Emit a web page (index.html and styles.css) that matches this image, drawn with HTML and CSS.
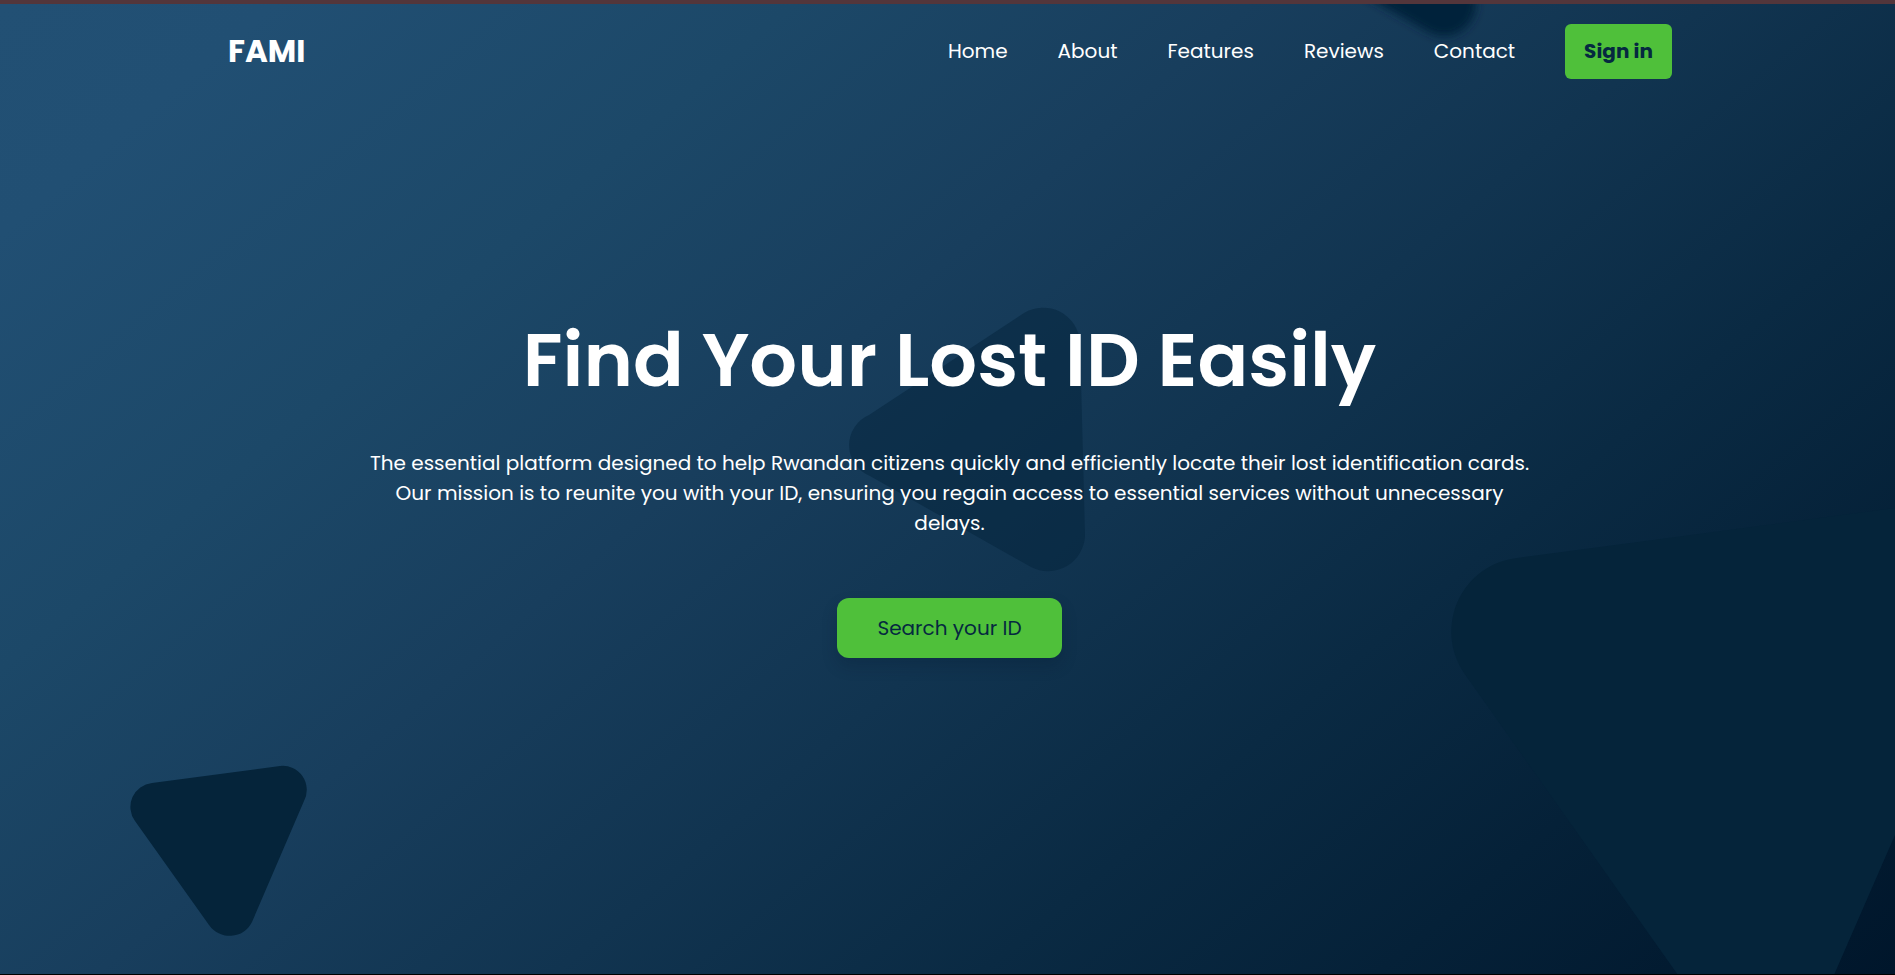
FILE: index.html
```html
<!DOCTYPE html>
<html lang="en">
<head>
<meta charset="utf-8">
<meta name="viewport" content="width=device-width, initial-scale=1">
<title>FAMI</title>
<link rel="stylesheet" href="styles.css">
</head>
<body>
<div class="page">
  <svg class="shapes" viewBox="0 0 1895 970" preserveAspectRatio="xMidYMid slice" aria-hidden="true">
    <defs>
      <filter id="soft" filterUnits="userSpaceOnUse" x="1200" y="-300" width="400" height="400"><feGaussianBlur stdDeviation="5"/></filter>
    </defs>
    <path class="shape soft" filter="url(#soft)" d="M1300 -82 L1442 -142 L1444 0 Z"/>
    <path class="shape faint" d="M1024 309 A37 37 0 0 1 1080 338 L1085 532 A37 37 0 0 1 1031 563 L870 472 A33 33 0 0 1 869 411 Z"/>
    <path class="shape" d="M152 779 L280 762 A24 24 0 0 1 304 797 L252 918 A25 25 0 0 1 209 921 L135 817 A24 24 0 0 1 152 779 Z"/>
    <path class="shape" d="M1517 554 L1895 504 L1990 600 L1895 831 L1834 971 L1678 971 L1464 669 A74 74 0 0 1 1517 554 Z"/>
  </svg>
  <header class="header">
    <a class="logo" href="#home">FAMI</a>
    <nav class="nav" aria-label="Main">
      <a class="nav-link" href="#home">Home</a>
      <a class="nav-link" href="#about">About</a>
      <a class="nav-link" href="#features">Features</a>
      <a class="nav-link" href="#reviews">Reviews</a>
      <a class="nav-link" href="#contact">Contact</a>
      <button class="sign-in" type="button">Sign in</button>
    </nav>
  </header>
  <main class="hero" id="home">
    <h1 class="title">Find Your Lost ID Easily</h1>
    <p class="lead">The essential platform designed to help Rwandan citizens quickly and efficiently locate their lost identification cards. Our mission is to reunite you with your ID, ensuring you regain access to essential services without unnecessary delays.</p>
    <button class="search" type="button">Search your ID</button>
  </main>
</div>
</body>
</html>
```
FILE: styles.css
```css
* {
  box-sizing: border-box;
}

body {
  margin: 0;
  color: #fff;
  font-family: Poppins, Inter, sans-serif;
}

button {
  border: 0;
  background: #4fc03a;
  color: #052940;
  font-family: inherit;
  cursor: pointer;
}

.page {
  position: relative;
  display: flex;
  flex-direction: column;
  min-height: 100vh;
  overflow: hidden;
  border-top: 4px solid #53363b;
  border-bottom: 1px solid #000;
  background: linear-gradient(140deg, #225074 0%, #214f73 9%, #1c4868 26%, #183e5d 41%, #113450 56%, #0a2a43 70%, #052138 83%, #00162b 100%);
}

.shapes {
  position: absolute;
  inset: 0;
  width: 100%;
  height: 100%;
}

.shape {
  fill: #05243a;
}

.faint {
  fill: #04243b;
  opacity: 0.5;
}

.soft {
  stroke: #05243a;
  stroke-width: 64px;
  stroke-linejoin: round;
}

.header {
  position: relative;
  display: flex;
  align-items: center;
  justify-content: space-between;
  padding: 20px 223px 0 228px;
}

.logo {
  padding-bottom: 1px;
  color: #fff;
  font-size: 31px;
  font-weight: 700;
  line-height: 40px;
  text-decoration: none;
}

.nav {
  display: flex;
  align-items: center;
  gap: 50px;
}

.nav-link {
  padding-bottom: 1px;
  color: #fff;
  font-size: 20px;
  line-height: 30px;
  text-decoration: none;
}

.sign-in {
  padding: 12px 19px 13px;
  border-radius: 6px;
  font-size: 20px;
  font-weight: 700;
  line-height: 30px;
}

.hero {
  position: relative;
  display: flex;
  flex: 1;
  flex-direction: column;
  align-items: center;
  justify-content: center;
  padding: 0 24px 90px 28px;
  text-align: center;
}

.title {
  margin: 0;
  font-size: 75px;
  font-weight: 600;
  line-height: 108px;
}

.lead {
  max-width: 1180px;
  margin: 34px 0 0;
  font-size: 20px;
  line-height: 30px;
}

.search {
  height: 60px;
  margin-top: 60px;
  padding: 0 40px;
  border-radius: 12px;
  box-shadow: 0 8px 16px rgb(0 20 40 / 20%);
  font-size: 20px;
}
```
